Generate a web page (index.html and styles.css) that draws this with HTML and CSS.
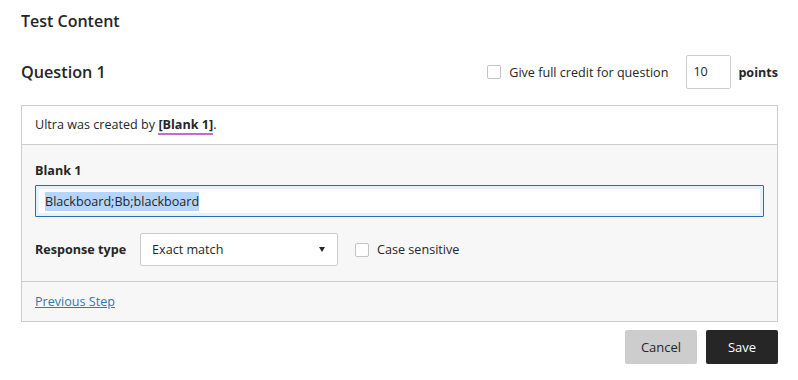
FILE: index.html
```html
<!DOCTYPE html>
<html lang="en">

<head>
    <meta charset="UTF-8">
    <meta name="viewport" content="width=device-width, initial-scale=1.0">
    <title>Test Content</title>
    <link rel="stylesheet" href="styles.css">
</head>

<body>
    <div class="page">
        <h1 class="page-title">Test Content</h1>

        <div class="question-head">
            <h2 class="question-title">Question 1</h2>
            <label class="credit">
                <span class="checkbox"></span>
                <span>Give full credit for question</span>
            </label>
            <div class="points-input">10</div>
            <span class="points-label">points</span>
        </div>

        <div class="question-box">
            <div class="prompt">
                Ultra was created by <span class="blank-tag">[Blank 1]</span>.
            </div>

            <div class="blank-edit">
                <div class="blank-label">Blank 1</div>
                <div class="answer-input"><span class="selected">Blackboard;Bb;blackboard</span></div>

                <div class="response-row">
                    <span class="response-label">Response type</span>
                    <div class="select">
                        <span>Exact match</span>
                        <span class="caret"></span>
                    </div>
                    <label class="case">
                        <span class="checkbox"></span>
                        <span>Case sensitive</span>
                    </label>
                </div>
            </div>

            <div class="box-footer">
                <a class="prev-link" href="#">Previous Step</a>
            </div>
        </div>

        <div class="actions">
            <button class="btn btn-cancel">Cancel</button>
            <button class="btn btn-save">Save</button>
        </div>
    </div>
</body>

</html>
```

FILE: styles.css
```css
body {
    margin: 0;
    font-family: "Open Sans", "Liberation Sans", sans-serif;
    color: #262626;
    background: #fff;
    font-size: 12.6px;
}

.page {
    padding: 11px 20px 0 21px;
}

.page-title {
    margin: 0;
    font-size: 16px;
    line-height: 20px;
    font-weight: 600;
}

.question-head {
    display: flex;
    align-items: center;
    margin-top: 24px;
    height: 34px;
}

.question-title {
    margin: 0;
    font-size: 16.2px;
    font-weight: 600;
    flex: 1;
}

.credit,
.case {
    display: flex;
    align-items: center;
    gap: 8px;
}

.checkbox {
    display: inline-block;
    width: 12px;
    height: 12px;
    border: 1px solid #c4c4c4;
    border-radius: 2px;
    background: #fff;
}

.points-input {
    box-sizing: border-box;
    width: 45px;
    height: 34px;
    margin-left: 18px;
    padding: 0 6px;
    line-height: 32px;
    border: 1px solid #cdcdcd;
    border-radius: 2px;
}

.points-label {
    margin-left: 7px;
    font-weight: 700;
}

.question-box {
    margin-top: 16px;
    border: 1px solid #cdcdcd;
}

.prompt {
    height: 38px;
    line-height: 38px;
    padding: 0 13px;
    border-bottom: 1px solid #cdcdcd;
}

.blank-tag {
    font-weight: 700;
    border-bottom: 2px solid #c36ad3;
}

.blank-edit {
    background: #f7f7f7;
    padding: 17px 13px 15px;
    border-bottom: 1px solid #cdcdcd;
}

.blank-label {
    font-weight: 700;
    line-height: 18px;
}

.answer-input {
    box-sizing: border-box;
    margin-top: 5px;
    height: 32px;
    border: 1px solid #2a6db5;
    border-radius: 1px;
    background: #fff;
    box-shadow: inset 0 0 0 3px #e8f0f9;
    display: flex;
    align-items: center;
    padding-left: 9px;
}

.selected {
    background: #b4d5fd;
    line-height: 19px;
}

.response-row {
    display: flex;
    align-items: center;
    margin-top: 16px;
}

.response-label {
    font-weight: 700;
    margin-right: 14px;
}

.select {
    box-sizing: border-box;
    width: 198px;
    height: 33px;
    padding: 0 12px 0 11px;
    display: flex;
    align-items: center;
    justify-content: space-between;
    background: #fff;
    border: 1px solid #cdcdcd;
    border-radius: 2px;
    margin-right: 17px;
}

.caret {
    width: 0;
    height: 0;
    border-left: 3px solid transparent;
    border-right: 3px solid transparent;
    border-top: 5px solid #262626;
}

.box-footer {
    height: 39px;
    display: flex;
    align-items: center;
    padding: 0 13px;
    background: #f7f7f7;
}

.prev-link {
    color: #2f7ab0;
    text-decoration: underline;
}

.actions {
    display: flex;
    justify-content: flex-end;
    gap: 9px;
    margin-top: 8px;
}

.btn {
    width: 72px;
    height: 34px;
    border: none;
    border-radius: 2px;
    font-family: inherit;
    font-size: 13px;
}

.btn-cancel {
    background: #cdcdcd;
    color: #262626;
}

.btn-save {
    background: #262626;
    color: #fff;
}
```
